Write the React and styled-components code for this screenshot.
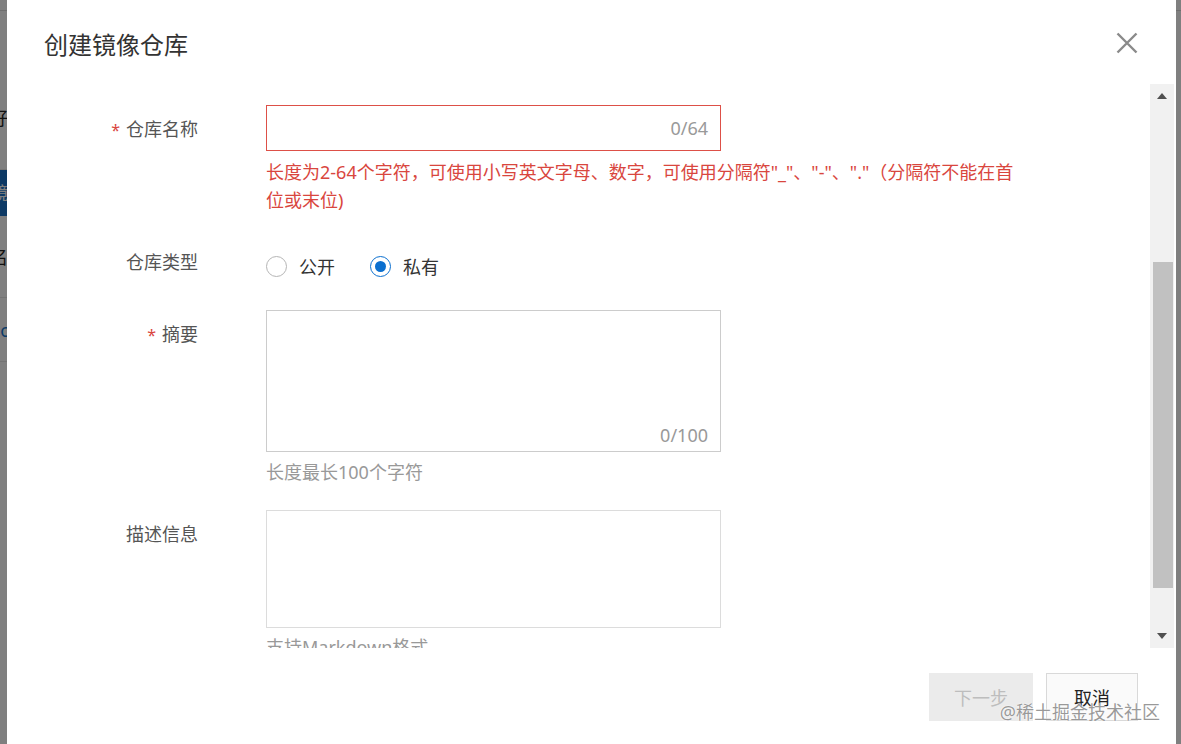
import React from 'react'
import styled, { createGlobalStyle } from 'styled-components'

const GlobalStyle = createGlobalStyle`
    html, body {
        margin: 0;
        padding: 0;
        width: 100%;
        height: 100%;
        overflow: hidden;
        font-family: "Noto Sans", "Noto Sans CJK SC", sans-serif;
    }
    * {
        box-sizing: border-box;
    }
`;

const Page = styled.div`
    width: 1181px;
    height: 744px;
    background: #fff;
    border-top: 1px solid #ddd;
    margin-top: 10px;
`

const SideNav = styled.div`
    width: 220px;
    display: flex;
    flex-direction: column;
    padding-top: 81px;
`

const NavItem = styled.div`
    height: ${({h}) => h}px;
    line-height: ${({lh, h}) => lh || h}px;
    margin-left: -10px;
    font-size: 18px;
    color: ${({active, link}) => active ? '#fff' : link ? '#1677d0' : '#222'};
    background: ${({active}) => active ? '#1a72c8' : 'transparent'};
    border-bottom: 1px solid ${({active}) => active ? 'transparent' : '#e6e6e6'};
`

const Overlay = styled.div`
    position: fixed;
    inset: 0;
    background: rgba(0, 0, 0, 0.5);
    display: flex;
    padding: 0 5px 0 7px;
`

const Dialog = styled.div`
    flex: 1;
    height: 744px;
    background: #fff;
    display: flex;
    flex-direction: column;
    position: relative;
`

const Header = styled.div`
    height: 84px;
    display: flex;
    align-items: center;
    justify-content: space-between;
    padding: 2px 38px 0 37px;
`

const Title = styled.h2`
    margin: 0;
    font-size: 24px;
    font-weight: 400;
    color: #333;
`

const CloseButton = styled.button`
    border: none;
    background: none;
    padding: 0;
    width: 22px;
    height: 22px;
    display: flex;
    cursor: pointer;
`

const Body = styled.div`
    flex: 1;
    display: flex;
    min-height: 0;
`

const FormScroll = styled.div`
    flex: 1;
    overflow: hidden;
    padding-top: 21px;
`

const FormRow = styled.div`
    display: grid;
    grid-template-columns: 191px 1fr;
    column-gap: 68px;
    margin-bottom: 24px;
`

const Label = styled.div`
    text-align: right;
    font-size: 18px;
    line-height: 48px;
    color: #555;
    white-space: nowrap;
`

const Star = styled.span`
    color: #d9463e;
    font-size: 16px;
    margin-right: 6px;
`

const Field = styled.div`
    display: flex;
    flex-direction: column;
`

const InputBox = styled.div`
    width: 455px;
    height: ${({h}) => h}px;
    border: 1px solid ${({error, light}) => error ? '#dd5048' : light ? '#dcdcdc' : '#cccccc'};
    display: flex;
    align-items: ${({multi}) => multi ? 'flex-end' : 'center'};
    justify-content: flex-end;
    padding: 0 12px ${({multi}) => multi ? 4 : 0}px 0;
`

const Counter = styled.span`
    font-size: 18px;
    color: #999;
`

const ErrorText = styled.div`
    width: 752px;
    margin-top: 7px;
    font-size: 18px;
    line-height: 28px;
    color: #d9463e;
`

const Hint = styled.div`
    margin-top: ${({top}) => top}px;
    font-size: 18px;
    line-height: 28px;
    color: #999;
    white-space: nowrap;
`

const RadioGroup = styled.div`
    display: flex;
    align-items: center;
    gap: 35px;
    height: 48px;
    padding-top: 8px;
`

const RadioOption = styled.label`
    display: flex;
    align-items: center;
    gap: 12px;
    font-size: 18px;
    color: #333;
`

const RadioCircle = styled.span`
    width: 21px;
    height: 21px;
    border-radius: 50%;
    border: 1px solid ${({checked}) => checked ? '#0b6fcf' : '#b5b5b5'};
    display: flex;
    align-items: center;
    justify-content: center;
    &::after {
        content: '';
        width: 11px;
        height: 11px;
        border-radius: 50%;
        background: ${({checked}) => checked ? '#0b6fcf' : 'transparent'};
    }
`

const ScrollBar = styled.div`
    width: 24px;
    margin-right: 2px;
    background: #f1f1f1;
    display: flex;
    flex-direction: column;
`

const ScrollArrow = styled.div`
    height: 24px;
    display: flex;
    align-items: center;
    justify-content: center;
`

const ScrollTrack = styled.div`
    flex: 1;
    padding: 0 1px 0 3px;
`

const ScrollThumb = styled.div`
    margin-top: 154px;
    height: 326px;
    background: #c1c1c1;
`

const Footer = styled.div`
    height: 96px;
    display: flex;
    justify-content: flex-end;
    align-items: flex-start;
    gap: 13px;
    padding: 25px 38px 0 0;
`

const Button = styled.button`
    height: 48px;
    width: ${({w}) => w}px;
    font-family: inherit;
    font-size: 18px;
    border: 1px solid ${({disabled}) => disabled ? '#ebebeb' : '#d9d9d9'};
    background: ${({disabled}) => disabled ? '#ebebeb' : '#fafafa'};
    color: ${({disabled}) => disabled ? '#bdbdbd' : '#222'};
    padding: 0;
`

const Watermark = styled.div`
    position: absolute;
    right: 16px;
    bottom: 20px;
    font-size: 18px;
    color: rgba(120, 120, 120, 0.75);
    text-shadow: 0 0 2px #fff, 0 0 1px #fff;
    pointer-events: none;
`

const Triangle = ({down}) => (
    <svg width="10" height="6" viewBox="0 0 10 6">
        <path d={down ? "M0 0 L10 0 L5 6 Z" : "M0 6 L10 6 L5 0 Z"} fill="#505050"/>
    </svg>
)

const App = () => {
  return (
    <>
        <GlobalStyle />
        <Page>
            <SideNav>
                <NavItem h={78} lh={52}>好友列表</NavItem>
                <NavItem h={46} active>镜像仓库</NavItem>
                <NavItem h={82}>名称</NavItem>
                <NavItem h={64} link>eci-image</NavItem>
            </SideNav>
        </Page>
        <Overlay>
            <Dialog>
                <Header>
                    <Title>创建镜像仓库</Title>
                    <CloseButton aria-label="关闭">
                        <svg width="22" height="22" viewBox="0 0 22 22">
                            <path d="M1.5 1.5 L20.5 20.5 M20.5 1.5 L1.5 20.5" stroke="#8a8a8a" strokeWidth="2.4" fill="none"/>
                        </svg>
                    </CloseButton>
                </Header>
                <Body>
                    <FormScroll>
                        <FormRow>
                            <Label><Star>*</Star>仓库名称</Label>
                            <Field>
                                <InputBox h={46} error>
                                    <Counter>0/64</Counter>
                                </InputBox>
                                <ErrorText>长度为2-64个字符，可使用小写英文字母、数字，可使用分隔符"_"、"-"、"."（分隔符不能在首位或末位)</ErrorText>
                            </Field>
                        </FormRow>
                        <FormRow>
                            <Label>仓库类型</Label>
                            <RadioGroup>
                                <RadioOption><RadioCircle />公开</RadioOption>
                                <RadioOption><RadioCircle checked />私有</RadioOption>
                            </RadioGroup>
                        </FormRow>
                        <FormRow>
                            <Label><Star>*</Star>摘要</Label>
                            <Field>
                                <InputBox h={142} multi>
                                    <Counter>0/100</Counter>
                                </InputBox>
                                <Hint top={6}>长度最长100个字符</Hint>
                            </Field>
                        </FormRow>
                        <FormRow>
                            <Label>描述信息</Label>
                            <Field>
                                <InputBox h={118} light />
                                <Hint top={5}>支持Markdown格式</Hint>
                            </Field>
                        </FormRow>
                    </FormScroll>
                    <ScrollBar>
                        <ScrollArrow><Triangle /></ScrollArrow>
                        <ScrollTrack><ScrollThumb /></ScrollTrack>
                        <ScrollArrow><Triangle down /></ScrollArrow>
                    </ScrollBar>
                </Body>
                <Footer>
                    <Button w={104} disabled>下一步</Button>
                    <Button w={92}>取消</Button>
                </Footer>
                <Watermark>@稀土掘金技术社区</Watermark>
            </Dialog>
        </Overlay>
    </>
  )
}

export default App;
